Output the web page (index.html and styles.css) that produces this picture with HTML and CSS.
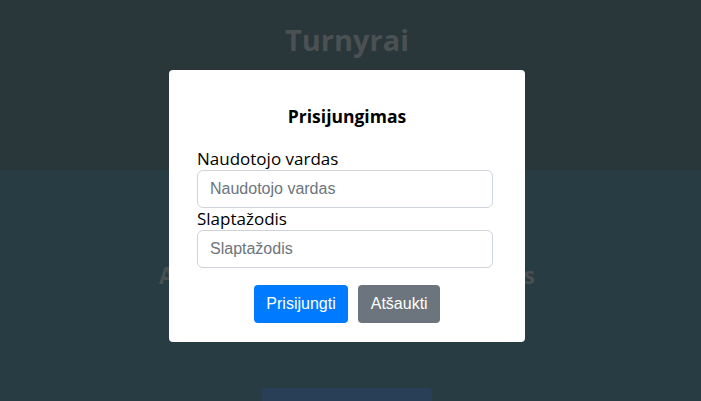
FILE: index.html
```html
<!DOCTYPE html>
<html lang="lt">
<head>
<meta charset="utf-8">
<title>Turnyrai</title>
<link rel="stylesheet" href="styles.css">
</head>
<body>
  <header class="top">
    <h1 class="brand">Turnyrai</h1>
  </header>
  <main class="main">
    <h2 class="section-title">Aktyvūs ir būsimi turnyrų sąrašas</h2>
    <button class="cta" type="button">Peržiūrėti turnyrus</button>
  </main>

  <div class="overlay">
    <form class="modal">
      <h3 class="modal-title">Prisijungimas</h3>
      <label class="field-label" for="user">Naudotojo vardas</label>
      <input class="field" id="user" type="text" placeholder="Naudotojo vardas">
      <label class="field-label" for="pass">Slaptažodis</label>
      <input class="field" id="pass" type="password" placeholder="Slaptažodis">
      <div class="actions">
        <button class="btn btn-primary" type="button">Prisijungti</button>
        <button class="btn btn-secondary" type="button">Atšaukti</button>
      </div>
    </form>
  </div>
</body>
</html>
```

FILE: styles.css
```css
* { box-sizing: border-box; }

html, body {
  margin: 0;
  padding: 0;
  height: 100%;
}

body {
  position: relative;
  background: #283c44;
  font-family: "Open Sans", "Noto Sans", sans-serif;
  overflow: hidden;
}

.top {
  height: 170px;
  background: #29363a;
  display: flex;
  justify-content: center;
  padding: 20px 7px 0 0;
}

.brand {
  margin: 0;
  font-size: 29px;
  font-weight: 700;
  color: #4b5053;
  line-height: 40px;
}

.main {
  display: flex;
  flex-direction: column;
  align-items: center;
  padding: 89px 7px 0 0;
}

.section-title {
  margin: 0;
  font-size: 22.3px;
  font-weight: 700;
  color: #4a4f52;
  line-height: 34px;
}

.cta {
  margin-top: 95px;
  width: 170px;
  height: 40px;
  border: none;
  border-radius: 4px;
  background: #283f57;
  color: #485565;
  font-family: "Liberation Sans", Arial, sans-serif;
  font-size: 16px;
}

.overlay {
  position: absolute;
  inset: 0;
  display: flex;
  justify-content: center;
  align-items: flex-start;
  padding: 70px 7px 0 0;
}

.modal {
  width: 356px;
  background: #ffffff;
  border-radius: 4px;
  padding: 34px 32px 19px 28px;
  display: flex;
  flex-direction: column;
}

.modal-title {
  margin: 0 0 20px 4px;
  text-align: center;
  font-size: 17.5px;
  font-weight: 700;
  color: #000;
  line-height: 24px;
}

.field-label {
  font-size: 17px;
  color: #000;
  line-height: 22px;
}

.field {
  width: 296px;
  height: 38px;
  border: 1px solid #ced4da;
  border-radius: 6px;
  padding: 0 12px;
  font-family: "Liberation Sans", Arial, sans-serif;
  font-size: 16px;
  color: #495057;
  background: #fff;
}

.field::placeholder { color: #6c757d; }

.actions {
  display: flex;
  justify-content: center;
  gap: 10px;
  margin-top: 17px;
  margin-right: -4px;
}

.btn {
  height: 38px;
  border: none;
  border-radius: 4px;
  padding: 0 12.5px;
  font-family: "Liberation Sans", Arial, sans-serif;
  font-size: 16px;
  color: #fff;
}

.btn-primary { background: #007bff; }
.btn-secondary { background: #6c757d; }
```
